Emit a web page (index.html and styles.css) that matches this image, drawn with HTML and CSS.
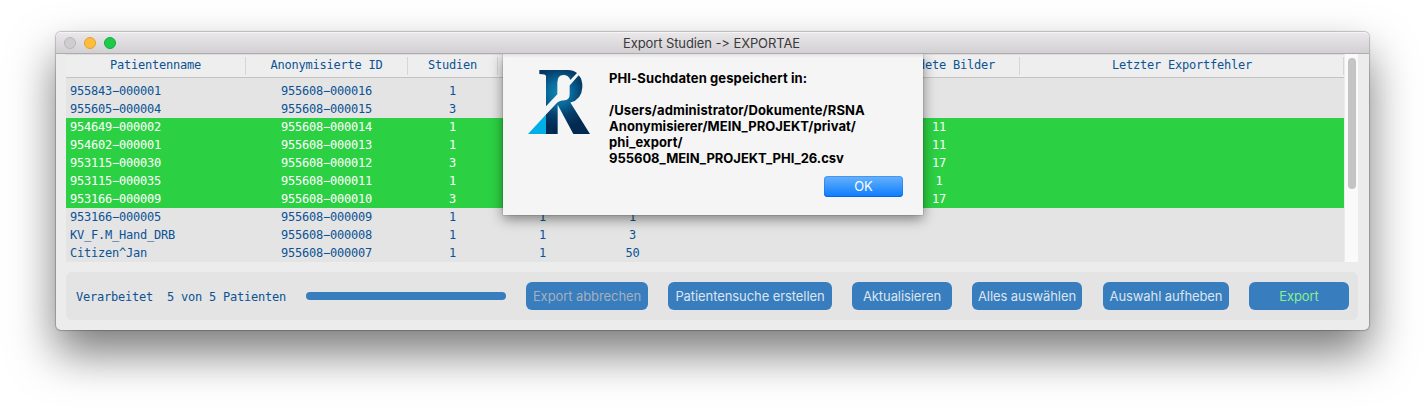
FILE: index.html
```html
<!DOCTYPE html>
<html lang="de">
<head>
<meta charset="utf-8">
<title>Export Studien</title>
<link rel="stylesheet" href="styles.css">
</head>
<body>
<main class="window">
  <header class="titlebar">
    <div class="lights"><i class="light"></i><i class="light yellow"></i><i class="light green"></i></div>
    <h1 class="title">Export Studien -&gt; EXPORTAE</h1>
  </header>
  <div class="content">
    <section class="table-area">
      <div class="table">
        <div class="row head"><span>Patientenname</span><span>Anonymisierte ID</span><span>Studien</span><span></span><span></span><span></span><span>Gesendete Bilder</span><span>Letzter Exportfehler</span></div>
        <div class="rows">
          <div class="row"><span>955843−000001</span><span>955608−000016</span><span>1</span></div>
          <div class="row"><span>955605−000004</span><span>955608−000015</span><span>3</span></div>
          <div class="row done"><span>954649−000002</span><span>955608−000014</span><span>1</span><span></span><span></span><span></span><span>11</span></div>
          <div class="row done"><span>954602−000001</span><span>955608−000013</span><span>1</span><span></span><span></span><span></span><span>11</span></div>
          <div class="row done"><span>953115−000030</span><span>955608−000012</span><span>3</span><span></span><span></span><span></span><span>17</span></div>
          <div class="row done"><span>953115−000035</span><span>955608−000011</span><span>1</span><span></span><span></span><span></span><span>1</span></div>
          <div class="row done"><span>953166−000009</span><span>955608−000010</span><span>3</span><span></span><span></span><span></span><span>17</span></div>
          <div class="row"><span>953166−000005</span><span>955608−000009</span><span>1</span><span>1</span><span>1</span></div>
          <div class="row"><span>KV_F.M_Hand_DRB</span><span>955608−000008</span><span>1</span><span>1</span><span>3</span></div>
          <div class="row"><span>Citizen^Jan</span><span>955608−000007</span><span>1</span><span>1</span><span>50</span></div>
        </div>
      </div>
      <div class="scrollbar"><div class="thumb"></div></div>
    </section>
    <footer class="footer">
      <span class="status">Verarbeitet  5 von 5 Patienten</span>
      <div class="progress"></div>
      <button class="btn cancel">Export abbrechen</button>
      <button class="btn search">Patientensuche erstellen</button>
      <button class="btn refresh">Aktualisieren</button>
      <button class="btn all">Alles auswählen</button>
      <button class="btn none">Auswahl aufheben</button>
      <button class="btn export">Export</button>
    </footer>
  </div>
  <div class="sheet-clip">
    <section class="sheet">
      <svg class="logo" viewBox="84 60 186 191" preserveAspectRatio="none">
        <defs>
          <radialGradient id="blue" gradientUnits="userSpaceOnUse" cx="178" cy="128" r="105">
            <stop offset="0" stop-color="#1089b3"/><stop offset=".35" stop-color="#08699a"/><stop offset=".65" stop-color="#053f6d"/><stop offset="1" stop-color="#022a50"/>
          </radialGradient>
        </defs>
        <path fill="#00afe6" d="M138 193V251H84Z"/>
        <g fill="url(#blue)">
          <path d="M118 60H204Q220 60 231 69L211 90Q206 75 190 75Q172 76 172 98V132L138 168V78Q138 72 118 72Z"/>
          <path d="M236 76Q248 88 247 112Q245 148 211 157L270 251H220L173 164V251H138V193L172 157Q178 151 194 150Q209 148 209 132V106Z"/>
        </g>
      </svg>
      <div class="message">
        <p class="wide">PHI-Suchdaten gespeichert in:</p>
        <p class="wide gap">/Users/administrator/Dokumente/RSNA</p>
        <p>Anonymisierer/MEIN_PROJEKT/privat/</p>
        <p class="wide">phi_export/</p>
        <p class="tight">955608_MEIN_PROJEKT_PHI_26.csv</p>
        <button class="ok">OK</button>
      </div>
    </section>
  </div>
</main>
</body>
</html>
```
FILE: styles.css
```css
* { box-sizing: border-box; }
body { margin: 0; height: 410px; padding: 32px 56px 0; background: #fff; overflow: hidden; font-family: Inter, sans-serif; }
button { border: 0; padding: 0; font-family: inherit; white-space: nowrap; }
.window { position: relative; width: 1313px; height: 298px; border-radius: 5px; background: #ececec; box-shadow: 0 0 1px 1px rgba(0,0,0,.22), 0 23px 46px rgba(0,0,0,.53); }
.titlebar { height: 22px; display: grid; grid-template-columns: 66px 1fr 68px; align-items: center; border-radius: 5px 5px 0 0; background: linear-gradient(#e9e7e9, #d2d0d2); border-top: 1px solid #f6f5f6; border-bottom: 1px solid #aeacae; }
.lights { display: flex; gap: 8px; padding-left: 8px; }
.light { width: 12px; height: 12px; border-radius: 50%; background: #cecece; border: 1px solid #b9b9b9; }
.yellow { background: #ffbd3c; border-color: #e5a02e; }
.green { background: #1dca4b; border-color: #14ad37; }
.title { margin: 0; padding-top: 1px; text-align: center; font-size: 13px; line-height: 19px; font-weight: 400; color: #3b393b; letter-spacing: -.1px; }
.content { padding: 0 10px; color: #0b5394; font-family: "DejaVu Sans Mono", monospace; font-size: 12px; letter-spacing: -.225px; }
.table-area { display: flex; height: 208px; }
.table { width: 1278px; background: #e4e4e4; }
.row { display: grid; grid-template-columns: 180px 162px 90px 90px 90px 182px 160px 324px; height: 18px; line-height: 18px; text-align: center; white-space: nowrap; }
.row span { padding-right: 1px; }
.row span:nth-child(7) { padding-right: 2px; }
.head { height: 24px; line-height: 20px; background: #eee; border-top: 1px solid #dcdcdc; border-bottom: 1px solid #c4c4c4; }
.head span { position: relative; }
.head span:last-child { padding-right: 0; }
.head span::after { content: ""; position: absolute; right: 0; top: 2px; width: 1px; height: 18px; background: #d6d6d6; }
.rows { padding-top: 4px; }
.rows span:first-child { text-align: left; padding-left: 4px; }
.done { background: #2cd143; color: #fff; }
.scrollbar { width: 13px; margin-left: 1px; padding: 4px 2px 0 3px; background: #fafafa; }
.thumb { width: 8px; height: 131px; border-radius: 4px; background: #c4c4c4; }
.footer { display: flex; align-items: center; margin-top: 10px; width: 1292px; height: 48px; padding-left: 10px; border-radius: 6px; background: #e4e4e4; }
.status { width: 230px; padding-top: 2px; white-space: pre; }
.progress { width: 200px; height: 8px; border-radius: 4px; background: #387dbe; }
.btn { height: 28px; margin-left: 20px; border-radius: 6px; background: #387dbe; color: #dce4ee; font: 13px/28px Inter, sans-serif; letter-spacing: -.08px; }
.cancel { width: 122px; color: #a5b0bc; }
.search { width: 164px; }
.refresh { width: 100px; }
.all { width: 110px; }
.none { width: 126px; margin-left: 21px; }
.export { width: 100px; color: #88ee92; }
/* The sheet hangs from the title bar, so its shadow is cut off along the top. */
.sheet-clip { position: absolute; left: 417px; top: 22px; width: 480px; height: 200px; padding: 0 30px; overflow: hidden; }
.sheet { display: flex; gap: 19px; width: 420px; height: 161px; padding: 16px 20px 0 25px; background: linear-gradient(#e2e2e2, #f5f5f5 4px); box-shadow: 0 0 1px rgba(0,0,0,.5), 0 4px 12px rgba(0,0,0,.45); }
.logo { width: 62px; height: 64px; flex: none; }
.message { width: 294px; display: flex; flex-direction: column; align-items: flex-start; color: #000; font-size: 13px; line-height: 16px; font-weight: 700; white-space: nowrap; letter-spacing: .04px; }
.message p { margin: 0; }
.message .gap { margin-top: 16px; }
.message .wide { letter-spacing: .11px; }
.message .tight { letter-spacing: -.03px; }
.ok { align-self: flex-end; width: 79px; height: 21px; margin-top: 10px; border-radius: 4px; background: linear-gradient(#69b2fb, #0a7cff); box-shadow: inset 0 0 0 1px rgba(10,100,235,.35), inset 0 -1px #0a66e4; color: #fff; font-size: 13px; line-height: 21px; }
```
